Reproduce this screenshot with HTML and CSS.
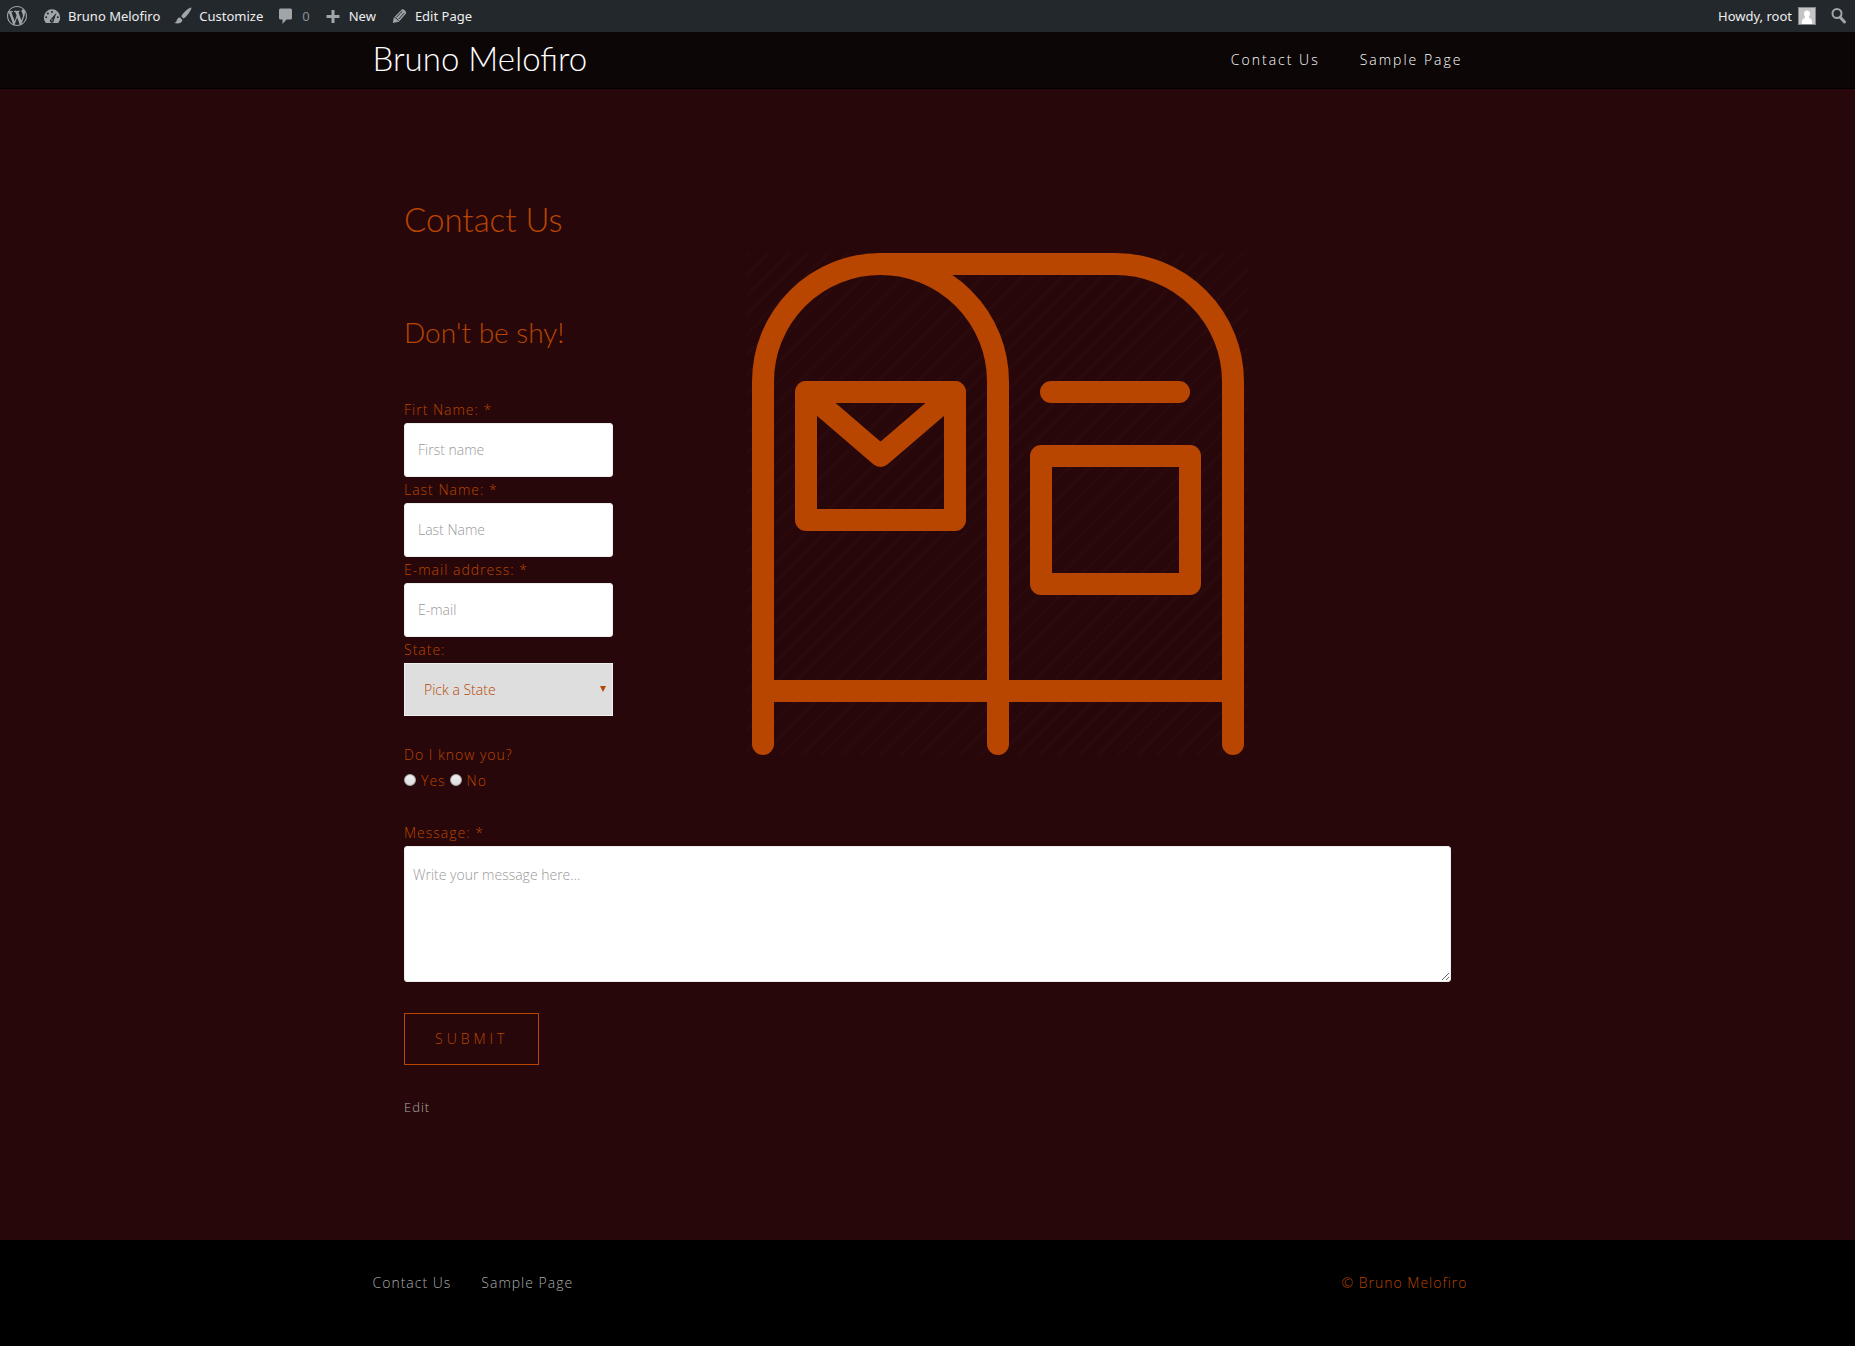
FILE: index.html
```html
<!DOCTYPE html>
<html lang="en">
<head>
<meta charset="utf-8">
<meta name="viewport" content="width=device-width, initial-scale=1">
<title>Contact Us – Bruno Melofiro</title>
<link rel="stylesheet" href="styles.css">
</head>
<body>
<nav class="adminbar" aria-label="Toolbar">
  <a class="ab-item ab-logo" href="#" aria-label="About WordPress">
    <svg class="ab-icon" viewBox="0 0 20 20"><path fill-rule="evenodd" d="M20 10c0-5.5-4.5-10-10-10S0 4.5 0 10s4.500 10 10 10 10-4.500 10-10zM7.780 15.370L4.370 6.220c.55-.02 1.170-.08 1.170-.08.5-.06.44-1.130-.06-1.110 0 0-1.450.11-2.370.11-.18 0-.37 0-.58-.01C4.120 2.690 6.870 1.110 10 1.110c2.330 0 4.450.87 6.050 2.340-.68-.11-1.650.39-1.650 1.580 0 .74.45 1.360.9 2.100.35.610.55 1.360.55 2.460 0 1.490-1.400 5-1.400 5l-3.030-8.370c.54-.02.82-.17.82-.17.5-.05.44-1.250-.06-1.220 0 0-1.440.12-2.380.12-.87 0-2.330-.12-2.330-.12-.5-.03-.56 1.200-.06 1.220l.92.08 1.260 3.410zM17.410 10c.24-.64.74-1.870.43-4.250.7 1.290 1.050 2.710 1.050 4.250 0 3.290-1.730 6.240-4.400 7.780.97-2.590 1.940-5.200 2.920-7.780zM6.100 18.090C3.120 16.650 1.110 13.530 1.110 10c0-1.300.23-2.480.72-3.590C3.250 10.300 4.670 14.200 6.100 18.090zm4.030-6.630l2.580 6.980c-.86.290-1.760.450-2.710.450-.79 0-1.570-.11-2.290-.33.81-2.380 1.620-4.740 2.420-7.100z"/></svg>
  </a>
  <a class="ab-item" href="#">
    <svg class="ab-icon" viewBox="0 0 20 20"><path d="M3.800 17h12.400A8.200 8.200 0 0 0 18.200 11.500 8.200 8.200 0 0 0 1.800 11.500 8.200 8.200 0 0 0 3.800 17z"/><g class="ab-cut"><circle cx="10" cy="6" r="1"/><circle cx="5.900" cy="7.400" r="1"/><circle cx="4.200" cy="11.200" r="1"/><circle cx="15.800" cy="11.200" r="1"/><path d="M14.600 6.400l-2.800 8.100a2 2 0 1 1-2.800-1.600z"/></g><circle cx="10" cy="14" r="0.800"/></svg>
    <span>Bruno Melofiro</span>
  </a>
  <a class="ab-item" href="#">
    <svg class="ab-icon" viewBox="0 0 20 20"><path d="M18.330 1.570c-1.200-.5-6.500 3.500-8.900 6.800-.7.900-1 1.700-1.100 2.200l2 2c.7-.2 1.500-.7 2.300-1.500 3-2.900 6.500-8.600 5.700-9.500zM7.100 11.600c-1.700-.2-2.700.7-3.200 2.500C3.600 15.500 2.800 16.500 1.300 17c3 .9 8.200.7 8-3.200z"/></svg>
    <span>Customize</span>
  </a>
  <a class="ab-item ab-muted" href="#" aria-label="0 comments">
    <svg class="ab-icon" viewBox="0 0 20 20"><path d="M4.500 2.500h10q1.500 0 1.500 1.500v8q0 1.500-1.500 1.500H10.500L6.500 18v-4.500h-2Q3 13.500 3 12V4q0-1.500 1.500-1.500z"/></svg>
    <span>0</span>
  </a>
  <a class="ab-item" href="#">
    <svg class="ab-icon" viewBox="0 0 20 20"><path d="M8.500 4h3v5h5v3h-5v5h-3v-5h-5V9h5z"/></svg>
    <span>New</span>
  </a>
  <a class="ab-item" href="#">
    <svg class="ab-icon" viewBox="0 0 20 20"><path d="M12.800 3.600c1.100-1.200 5.300 2.300 4.200 3.900l-7.200 8.200L3.800 17l.9-5.200z"/><path class="ab-cut-line" d="M5.500 11.600c1.700.3 3.200 1.500 3.800 3.300M7.500 11.300l5.700-6.200M9.600 13.200l5.700-6.300"/></svg>
    <span>Edit Page</span>
  </a>
  <a class="ab-item ab-account" href="#">
    <span>Howdy, root</span>
    <svg class="ab-avatar" viewBox="0 0 18 18"><path class="av-bg" d="M0 0h18v18H0z"/><path class="av-person" d="M9 3.500c2 0 3 1.500 3 3.300 0 1.300-.5 2.400-1.300 3.200.2 1 1.300 1.200 2.300 2 1 .9 1.200 3 1.200 5H3.800c0-2 .2-4.100 1.200-5 1-.8 2.100-1 2.300-2C6.500 9.200 6 8.100 6 6.800 6 5 7 3.500 9 3.500z"/></svg>
  </a>
  <a class="ab-item" href="#" aria-label="Search">
    <svg class="ab-icon" viewBox="0 0 20 20"><circle class="ab-ring" cx="8" cy="7.500" r="4.500"/><path class="ab-handle" d="M11 11l4.500 5"/></svg>
  </a>
</nav>

<header class="site-header">
  <div class="container bar">
    <a class="site-title" href="#">Bruno Melofiro</a>
    <nav class="main-nav" aria-label="Main">
      <a href="#">Contact Us</a>
      <a href="#">Sample Page</a>
    </nav>
  </div>
</header>

<main class="page">
  <form class="contact">
    <div class="top">
      <div class="fields">
        <h1>Contact Us</h1>
        <h2>Don't be shy!</h2>
        <label for="first">Firt Name: *</label>
        <input class="box" id="first" type="text" placeholder="First name">
        <label for="last">Last Name: *</label>
        <input class="box" id="last" type="text" placeholder="Last Name">
        <label for="email">E-mail address: *</label>
        <input class="box" id="email" type="email" placeholder="E-mail">
        <label for="state">State:</label>
        <div class="select">
          <select id="state"><option>Pick a State</option></select>
        </div>
        <fieldset class="know">
          <legend>Do I know you?</legend>
          <div class="choices">
            <label><input type="radio" name="know" value="yes">Yes</label>
            <label><input type="radio" name="know" value="no">No</label>
          </div>
        </fieldset>
      </div>
      <svg class="mailbox" viewBox="0 0 502 502" role="img" aria-label="Mailbox">
        <defs>
          <pattern id="stripes" width="14" height="14" patternUnits="userSpaceOnUse" patternTransform="rotate(45)">
            <path class="stripe" d="M0 0h3v14h-3z"/>
          </pattern>
        </defs>
        <path fill="url(#stripes)" d="M0 0h502v502H0z"/>
        <g class="lines">
          <path d="M16 491V128.500a117.500 117.500 0 0 1 235 0V491"/>
          <path d="M133.500 11h235A117.500 117.500 0 0 1 486 128.500V491M16 438h470"/>
          <path d="M59 139h149v128H59zL133.500 203 208 139"/>
          <path d="M304 139h128M294 203h149v128H294z"/>
        </g>
      </svg>
    </div>
    <label class="message-label" for="message">Message: *</label>
    <textarea id="message" placeholder="Write your message here..."></textarea>
    <button type="submit">SUBMIT</button>
  </form>
  <a class="edit" href="#">Edit</a>
</main>

<footer class="site-footer">
  <div class="container bar">
    <nav class="footer-nav" aria-label="Footer">
      <a href="#">Contact Us</a>
      <a href="#">Sample Page</a>
    </nav>
    <span class="copyright">© Bruno Melofiro</span>
  </div>
</footer>
</body>
</html>
```
FILE: styles.css
```css
:root {
  --accent: #b84600;
  --page: #28070a;
  --text: "Open Sans", "Noto Sans", sans-serif;
  --display: Lato, "Open Sans", sans-serif;
}

* {
  box-sizing: border-box;
}

body {
  margin: 0;
  min-height: 100vh;
  display: flex;
  flex-direction: column;
  background: #000;
  color: var(--accent);
  font: 300 14px/26px var(--text);
  letter-spacing: 1px;
}

a {
  color: inherit;
  text-decoration: none;
}

/* Toolbar */

.adminbar {
  display: flex;
  height: 32px;
  background: #23282d;
  color: #eee;
  font: 400 13px/32px "Noto Sans", sans-serif;
  letter-spacing: 0;
}

.ab-item {
  display: flex;
  align-items: center;
  gap: 6px;
  padding: 0 6px 0 7px;
}

.ab-logo {
  padding-right: 8px;
}

.ab-icon {
  width: 20px;
  height: 20px;
  fill: #a0a5aa;
}

.ab-cut {
  fill: #23282d;
}

.ab-cut-line {
  fill: none;
  stroke: #23282d;
}

.ab-ring,
.ab-handle {
  fill: none;
  stroke: #a0a5aa;
  stroke-width: 2;
}

.ab-handle {
  stroke-width: 3;
  stroke-linecap: round;
}

.ab-muted {
  color: #8a8f94;
}

.ab-account {
  margin-left: auto;
}

.ab-avatar {
  width: 18px;
  height: 18px;
}

.av-bg {
  fill: #c4c4c4;
  stroke: #82878c;
  stroke-width: 2;
}

.av-person {
  fill: #fff;
}

/* Header */

.container {
  width: 100%;
  max-width: 1110px;
  margin: 0 auto;
  padding-right: 15px;
}

.bar {
  display: flex;
  align-items: center;
  justify-content: space-between;
}

.site-header {
  background: #0c0606;
  border-bottom: 1px solid #000;
}

.site-title {
  padding-bottom: 4px;
  color: #fff;
  font: 300 33px/52px var(--display);
  letter-spacing: 0;
}

.main-nav {
  display: flex;
  gap: 40px;
  padding: 0 5px;
  color: #fff;
  letter-spacing: 2px;
}

/* Contact page */

.page {
  padding: 105px 0 120px;
  background: var(--page);
}

.contact,
.edit {
  display: block;
  width: calc(100% - 40px);
  max-width: 1047px;
  margin: 0 auto;
}

.top {
  display: flex;
  align-items: flex-start;
  gap: 134px;
  margin-bottom: 26px;
}

.fields {
  flex: 0 0 20%;
  min-width: 200px;
}

.mailbox {
  flex: 0 1 502px;
  min-width: 0;
  margin-top: 59px;
}

.stripe {
  fill: #2a0a0c;
}

.lines {
  fill: none;
  stroke: var(--accent);
  stroke-width: 22;
  stroke-linecap: round;
  stroke-linejoin: round;
}

h1,
h2 {
  white-space: nowrap;
  letter-spacing: 0;
}

h1 {
  margin: 0 0 70px;
  font: 300 33px/50px var(--display);
}

h2 {
  margin: 0 0 47px;
  font: 300 28px/36px var(--display);
}

.fields > label,
.message-label {
  display: block;
}

.box,
textarea,
select {
  display: block;
  width: 100%;
  border: 1px solid #eee;
  font: 300 14px/26px var(--text);
}

.box,
textarea {
  border-radius: 3px;
  background: #fff;
  color: #444;
}

.box {
  height: 54px;
  padding: 0 13px 2px;
}

textarea {
  height: 136px;
  padding: 15px 8px;
}

::placeholder {
  color: #999;
  opacity: 1;
}

.select {
  position: relative;
}

.select::after {
  content: "";
  position: absolute;
  top: 23px;
  right: 7px;
  border: solid transparent;
  border-width: 6px 3px 0;
  border-top-color: var(--accent);
}

select {
  height: 53px;
  padding: 0 19px;
  appearance: none;
  border-radius: 0;
  background: #dedede;
  color: var(--accent);
}

.know {
  margin: 26px 0 0;
  padding: 0;
  border: 0;
}

legend {
  padding: 0;
}

.choices {
  display: flex;
  gap: 4px;
}

.choices label {
  display: flex;
  align-items: center;
  gap: 5px;
}

.choices input {
  width: 12px;
  height: 12px;
  margin: 0 0 2px;
  appearance: none;
  border: 1px solid #aaa;
  border-radius: 50%;
  background: linear-gradient(#eee, #ddd);
}

button {
  display: block;
  height: 52px;
  margin: 31px 0 29px;
  padding: 0 30px;
  border: 1px solid var(--accent);
  background: none;
  color: inherit;
  font: 300 14px/26px var(--text);
  letter-spacing: 4px;
}

.edit {
  color: #aaa;
  font-size: 13px;
}

/* Footer */

.site-footer {
  padding: 30px 0;
}

.footer-nav {
  display: flex;
  gap: 30px;
  color: #aaa;
}
```
